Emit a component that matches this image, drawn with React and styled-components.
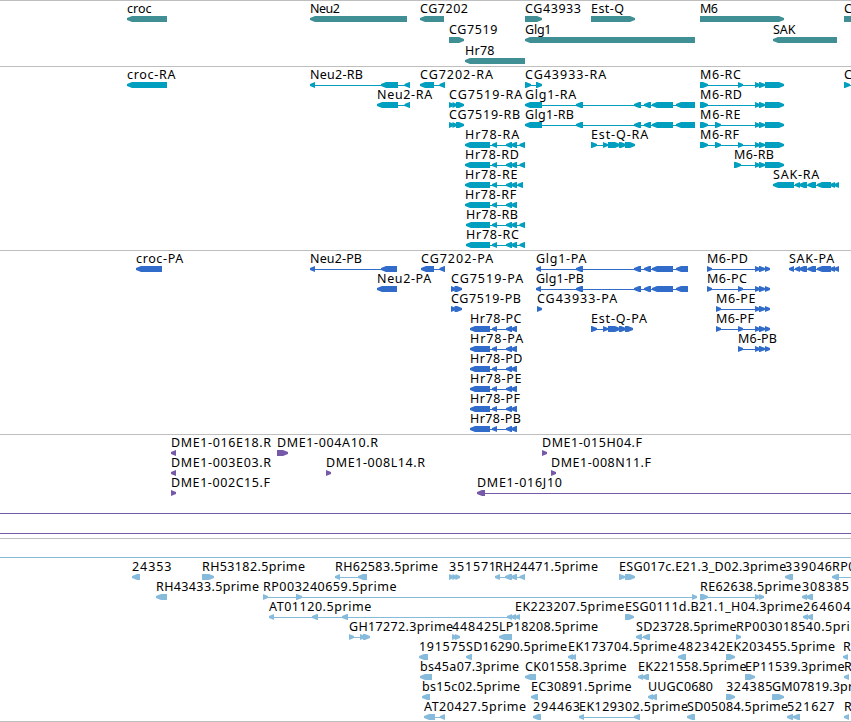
import React from "react";
import styled, { createGlobalStyle } from "styled-components";

const GlobalStyle = createGlobalStyle`
  body {
    margin: 0;
    background: #fff;
    overflow: hidden;
  }
`;

const Browser = styled.main`
  display: flex;
  flex-direction: column;
  width: 851px;
  height: 722px;
  overflow: hidden;
  background: #fff;
`;

const Track = styled.section`
  display: flex;
  flex-direction: column;
  flex: none;
  box-sizing: border-box;
  height: ${(p) => p.$height}px;
  padding-top: 1px;
  border-top: 1px solid #bebebe;
  border-bottom: ${(p) => (p.$last ? "1px solid #bebebe" : "none")};
  color: ${(p) => p.$color};
`;

const Lane = styled.svg`
  display: block;
  flex: none;
  width: 851px;
  height: ${(p) => p.$pitch}px;
  overflow: visible;
`;

const Label = styled.text`
  font: 12.5px "Noto Sans", "DejaVu Sans", sans-serif;
  fill: #000;
  white-space: pre;
`;

const Intron = styled.rect`
  fill: currentColor;
  shape-rendering: crispEdges;
`;

const Exon = styled.polygon`
  fill: currentColor;
`;

const TOP = 14;
const BOTTOM = 20;
const MIDDLE = 17;
const TIP = 5;

function exonPoints(direction, a, b) {
  const tip = Math.min(TIP, b - a);
  return direction === "L"
    ? `${a},${MIDDLE - 0.9} ${a + tip},${TOP} ${b},${TOP} ${b},${BOTTOM} ${a + tip},${BOTTOM} ${a},${MIDDLE + 0.9}`
    : `${a},${TOP} ${b - tip},${TOP} ${b},${MIDDLE - 0.9} ${b},${MIDDLE + 0.9} ${b - tip},${BOTTOM} ${a},${BOTTOM}`;
}

// A feature is [label, label end, direction, exons, optional intron end].
function Feature({ data }) {
  const [label, labelEnd, direction, exons, lineEnd] = data;
  const start = exons[0][0];
  const end = lineEnd || exons[exons.length - 1][1];
  const joined = exons.length > 1 || lineEnd;
  return (
    <g>
      {joined && <Intron x={start + 1} y={MIDDLE} width={end - start - 2} height={1} />}
      {exons.map(([a, b]) => (
        <Exon key={a} points={exonPoints(direction, a, b)} />
      ))}
      <Label
        x={start}
        y={11}
        textLength={labelEnd ? labelEnd - start + 0.5 : undefined}
      >
        {label}
      </Label>
    </g>
  );
}

const GLG = [[576, 583], [634, 641], [644, 651], [652, 673]];
const HR = [[492, 497], [506, 512], [511, 517]];
const hrR = (start, last) => [[start, 490], ...HR, ...(last ? [[last - 5.5, last]] : [])];
const hrP = [[470, 490], ...HR];
const M6R = [[755, 760], [759, 765], [765, 784]];
const M6P = [[755, 760], [759, 765], [765, 770]];
const NEU_END = [404.5, 410];
const SAK = [[795, 800], [799, 807], [807.5, 816], [817, 831], [830, 835], [834, 839]];
const CGR = [[449, 454], [452.5, 457], [456, 464]];
const CGP = [[451, 456], [454.5, 462]];
const glgR = [[525, 542], ...GLG, [676, 695]];
const glgP = [[536, 541], ...GLG, [676, 688]];
const EST = [[591, 597], [603, 608], [608, 620], [619, 626]];

const TRACKS = [
  {
    id: "genes",
    color: "#3f8f94",
    height: 66,
    pitch: 21,
    lanes: [
      [
        ["croc", 151, "L", [[127, 167]]],
        ["Neu2", 339.5, "L", [[310, 407]]],
        ["CG7202", 467.5, "L", [[420, 444]]],
        ["CG43933", 580.5, "R", [[525, 542]]],
        ["Est-Q", 623.5, "R", [[591, 635]]],
        ["M6", 717.5, "R", [[700, 784]]],
        ["C", 0, "R", [[844, 870]]],
      ],
      [
        ["CG7519", 497, "R", [[449, 464]]],
        ["Glg1", 551, "L", [[525, 695]]],
        ["SAK", 795, "L", [[773, 837]]],
      ],
      [["Hr78", 494, "L", [[465, 525]]]],
    ],
  },
  {
    id: "transcripts",
    color: "#009fbf",
    height: 184,
    pitch: 20,
    lanes: [
      [
        ["croc-RA", 175, "L", [[127, 167]]],
        ["Neu2-RB", 362.5, "L", [[310, 315], [381, 398], NEU_END]],
        ["CG7202-RA", 492.5, "L", [[420, 434], [439.5, 445]]],
        ["CG43933-RA", 605.7, "R", [[525, 531], [536, 542]]],
        ["M6-RC", 740.5, "R", [[700, 708], [738, 743], ...M6R]],
        ["C", 0, "R", [[844, 850]], 870],
      ],
      [
        ["Neu2-RA", 431.7, "L", [[377, 398], NEU_END]],
        ["CG7519-RA", 521.7, "R", CGR],
        ["Glg1-RA", 575.7, "L", glgR],
        ["M6-RD", 741.5, "R", [[700, 708], ...M6R]],
      ],
      [
        ["CG7519-RB", 519.7, "R", CGR],
        ["Glg1-RB", 573.5, "L", glgR],
        ["M6-RE", 740, "R", [[700, 708], [715, 721], ...M6R]],
      ],
      [
        ["Hr78-RA", 518.7, "L", hrR(465, 525)],
        ["Est-Q-RA", 647.7, "R", [...EST, [625, 635]]],
        ["M6-RF", 738.5, "R", [[700, 708], [715, 721], [738, 743], ...M6R]],
      ],
      [
        ["Hr78-RD", 518.5, "L", hrR(465, 525)],
        ["M6-RB", 773.5, "R", [[734, 741], ...M6R]],
      ],
      [
        ["Hr78-RE", 517, "L", hrR(465, 523)],
        ["SAK-RA", 818.7, "L", [[773, 794], ...SAK]],
      ],
      [["Hr78-RF", 515.7, "L", hrR(465)]],
      [["Hr78-RB", 517.5, "L", hrR(466, 525)]],
      [["Hr78-RC", 518.5, "L", hrR(466, 525)]],
    ],
  },
  {
    id: "proteins",
    color: "#316ccb",
    height: 184,
    pitch: 20,
    lanes: [
      [
        ["croc-PA", 182.7, "L", [[136, 162]]],
        ["Neu2-PB", 361.5, "L", [[310, 315], [381, 397]]],
        ["CG7202-PA", 492.7, "L", [[421, 434], [439.5, 445]]],
        ["Glg1-PA", 586, "L", glgP],
        ["M6-PD", 747.5, "R", [[707, 712], ...M6P]],
        ["SAK-PA", 833.7, "L", [[789, 794], ...SAK]],
      ],
      [
        ["Neu2-PA", 430.7, "L", [[377, 397]]],
        ["CG7519-PA", 522.7, "R", CGP],
        ["Glg1-PB", 583.5, "L", glgP],
        ["M6-PC", 746.5, "R", [[707, 712], [738, 743], ...M6P]],
      ],
      [
        ["CG7519-PB", 520.5, "R", CGP],
        ["CG43933-PA", 616.7, "R", [[537, 542]]],
        ["M6-PE", 755, "R", [[716, 721], ...M6P]],
      ],
      [
        ["Hr78-PC", 521, "L", hrP],
        ["Est-Q-PA", 646.5, "R", [...EST, [625, 633]]],
        ["M6-PF", 753.5, "R", [[716, 721], [738, 743], ...M6P]],
      ],
      [
        ["Hr78-PA", 522.7, "L", hrP],
        ["M6-PB", 776.5, "R", [[738, 743], ...M6P]],
      ],
      [["Hr78-PD", 522, "L", hrP]],
      [["Hr78-PE", 521, "L", hrP]],
      [["Hr78-PF", 519.5, "L", hrP]],
      [["Hr78-PB", 520.5, "L", hrP]],
    ],
  },
  {
    id: "clones",
    color: "#7659a8",
    height: 104,
    pitch: 20,
    lanes: [
      [
        ["DME1-016E18.R", 270.5, "L", [[171, 176]]],
        ["DME1-004A10.R", 377.5, "R", [[277, 288]]],
        ["DME1-015H04.F", 641.5, "R", [[542, 547]]],
      ],
      [
        ["DME1-003E03.R", 270.5, "L", [[171, 176]]],
        ["DME1-008L14.R", 424.5, "R", [[326, 331]]],
        ["DME1-008N11.F", 650.5, "R", [[551, 556]]],
      ],
      [
        ["DME1-002C15.F", 269.5, "R", [[171, 176]]],
        ["DME1-016J10", 561.5, "L", [[477, 485]], 870],
      ],
      "span",
      "span",
    ],
  },
  {
    id: "ests",
    color: "#87bbdc",
    height: 184,
    pitch: 20,
    last: true,
    lanes: [
      "span",
      [
        ["24353", 171, "L", [[132, 140]]],
        ["RH53182.5prime", 304.5, "R", [[202, 214]]],
        ["RH62583.5prime", 437.5, "L", [[335, 340], [358, 367]]],
        ["351571", 495.5, "R", [[449, 454], [452.5, 457], [455.5, 460]]],
        ["RH24471.5prime", 597.5, "L", [[495, 500], [505, 512], [511, 517], [519.5, 525]]],
        ["ESG017c.E21.3_D02.3prime", 785.7, "R", [[619, 625], [625, 635]]],
        ["339046", 831.5, "L", [[785, 793]]],
        ["RP0", 855, "L", [[832, 839]], 870],
      ],
      [
        ["RH43433.5prime", 258.5, "L", [[156, 167]]],
        ["RP003240659.5prime", 396, "R", [[263, 268], [296, 302], [692, 697]]],
        ["RE62638.5prime", 800.5, "R", [[700, 708], [755, 760], [759, 764]]],
        ["308385", 848.5, "L", [[802, 807], [806, 813]]],
      ],
      [
        ["AT01120.5prime", 370.7, "L", [[269, 274], [312, 318], [342, 348], [507, 512], [511, 516]]],
        ["EK223207.5prime", 623.7, "L", [[515, 520]]],
        ["ESG0111d.B21.1_H04.3prime", 802.5, "R", [[625, 634]]],
        ["264604", 850, "L", [[803, 808], [807, 813]]],
      ],
      [
        ["GH17272.3prime", 452.5, "R", [[349, 354], [360, 365], [363, 370]]],
        ["448425", 498.5, "R", [[452, 457], [455, 460]]],
        ["LP18208.5prime", 597.5, "L", [[499, 512]]],
        ["SD23728.5prime", 736, "L", [[636, 642], [643, 650]]],
        ["RP003018540.5prime", 869, "R", [[736, 741]]],
      ],
      [
        ["191575", 465, "L", [[419, 428]]],
        ["SD16290.5prime", 566.5, "L", [[466, 472]]],
        ["EK173704.5prime", 676.5, "L", [[568, 573], [571, 576]]],
        ["482342", 725, "L", [[678, 686]]],
        ["EK203455.5prime", 834.5, "R", [[726, 735]]],
        ["R", 0, "L", [[843, 848]]],
      ],
      [
        ["bs45a07.3prime", 518.5, "L", [[420, 432]]],
        ["CK01558.3prime", 626, "L", [[525, 536]]],
        ["EK221558.5prime", 746, "L", [[638, 643], [642, 649]]],
        ["EP11539.3prime", 844, "R", [[745, 755]]],
        ["R", 0, "L", [[844, 849]]],
      ],
      [
        ["bs15c02.5prime", 519.5, "L", [[422, 430]]],
        ["EC30891.5prime", 631, "L", [[531, 538]]],
        ["UUGC0680", 712.5, "L", [[648, 653], [651, 657]]],
        ["324385", 772, "R", [[726, 735]]],
        ["GM07819.3prime", 875, "R", [[772, 784]]],
      ],
      [
        ["AT20427.5prime", 525.5, "L", [[424, 435], [440, 445]]],
        ["294463", 579.5, "L", [[533, 541]]],
        ["EK129302.5prime", 687.5, "L", [[579, 584], [634, 640]]],
        ["SD05084.5prime", 787.5, "L", [[687, 695]]],
        ["521627", 834, "L", [[787, 793], [793, 800]]],
        ["R", 0, "L", [[844, 849]]],
      ],
    ],
  },
];

export default function App() {
  return (
    <>
      <GlobalStyle />
      <Browser>
        {TRACKS.map((track) => (
          <Track key={track.id} $height={track.height} $color={track.color} $last={track.last}>
            {track.lanes.map((lane, i) => (
              <Lane key={i} $pitch={track.pitch}>
                {lane === "span" ? (
                  <Intron x={0} y={MIDDLE} width={851} height={1} />
                ) : (
                  lane.map((data) => <Feature key={data[0]} data={data} />)
                )}
              </Lane>
            ))}
          </Track>
        ))}
      </Browser>
    </>
  );
}
